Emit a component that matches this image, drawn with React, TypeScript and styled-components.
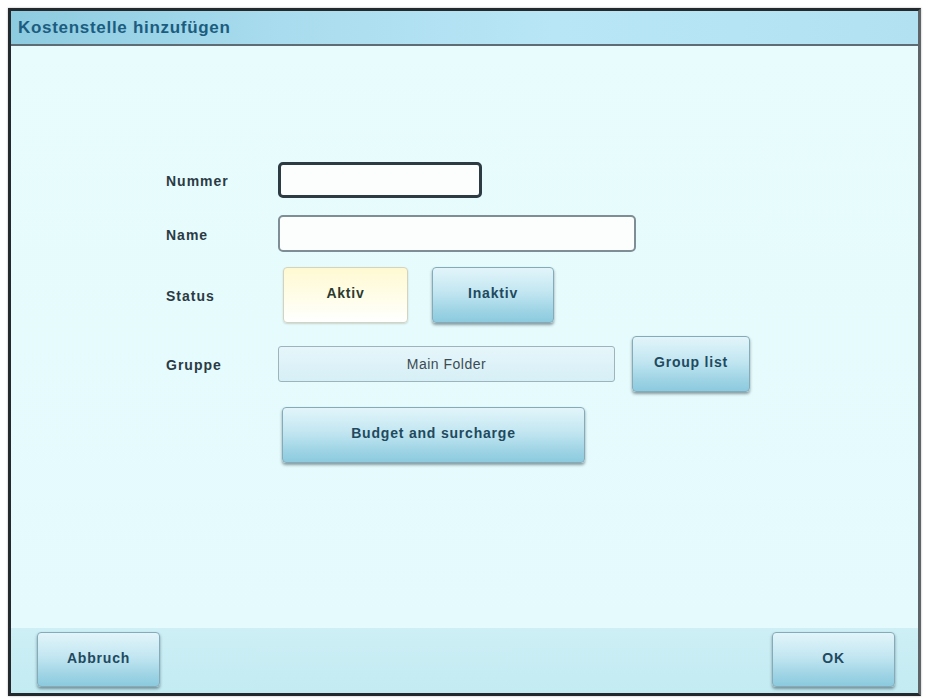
import React from "react";
import styled, { createGlobalStyle } from "styled-components";

const Global = createGlobalStyle`
  html, body { margin: 0; padding: 0; background: #ffffff; }
  body { font-family: "Liberation Sans", Arial, sans-serif; }
  #root { padding: 8px 5px 2px 8px; }
`;

const Frame = styled.div`
  width: 913px;
  height: 688px;
  box-sizing: border-box;
  border: 3px solid #23292d;
  border-right-color: #5d6569;
  display: flex;
  flex-direction: column;
  background: #e6fbfd;
  box-shadow: 0 0 2px rgba(0,0,0,0.3);
`;

const TitleBar = styled.div`
  height: 35px;
  flex: none;
  box-sizing: border-box;
  border-bottom: 2px solid #5e6d73;
  background: linear-gradient(90deg, #8dcbe0 0%, #a9dcee 30%, #b8e6f6 60%, #b2e2f2 100%);
  display: flex;
  align-items: center;
  padding-left: 7px;
  color: #1b5d80;
  font-weight: bold;
  font-size: 17px;
  letter-spacing: 0.7px;
`;

const Content = styled.div`
  flex: 1;
  padding: 116px 0 0 155px;
  background: linear-gradient(180deg, #e8fcfd 0%, #e4fafc 100%);
`;

const Row = styled.div<{ $h: number; $mt: number }>`
  display: flex;
  align-items: center;
  height: ${(p) => p.$h}px;
  margin-top: ${(p) => p.$mt}px;
`;

const Label = styled.div`
  width: 112px;
  flex: none;
  font-weight: bold;
  font-size: 14px;
  letter-spacing: 1px;
  color: #2b3a44;
  padding-top: 2px;
`;

const Input = styled.div<{ $w: number; $h: number; $strong?: boolean }>`
  width: ${(p) => p.$w}px;
  height: ${(p) => p.$h}px;
  box-sizing: border-box;
  background: #fcfefe;
  border: ${(p) => (p.$strong ? "3px solid #2d3b42" : "2px solid #7f8e94")};
  border-radius: 5px;
`;

const Field = styled.div`
  width: 337px;
  height: 36px;
  box-sizing: border-box;
  border: 1px solid #9db4bc;
  border-radius: 3px;
  background: linear-gradient(180deg, #e6f6fa 0%, #d6eff6 100%);
  display: flex;
  align-items: center;
  justify-content: center;
  font-size: 14px;
  letter-spacing: 0.5px;
  color: #3d4b52;
`;

const Button = styled.div<{ $w: number; $h?: number; $ml?: number; $active?: boolean }>`
  width: ${(p) => p.$w}px;
  height: ${(p) => p.$h ?? 56}px;
  margin-left: ${(p) => p.$ml ?? 0}px;
  flex: none;
  box-sizing: border-box;
  border-radius: 4px;
  border: 1px solid ${(p) => (p.$active ? "#d4d3bd" : "#86abb8")};
  background: ${(p) =>
    p.$active
      ? "linear-gradient(180deg, #fff9d2 0%, #fffde9 55%, #ffffff 100%)"
      : "linear-gradient(180deg, #e2f5fa 0%, #c2e6f1 45%, #9dd3e4 80%, #8ccadf 100%)"};
  box-shadow: ${(p) =>
    p.$active ? "0 1px 2px rgba(0,0,0,0.15)" : "0 2px 3px rgba(20,40,50,0.45)"};
  display: flex;
  align-items: center;
  justify-content: center;
  font-weight: bold;
  font-size: 14px;
  letter-spacing: 0.8px;
  color: ${(p) => (p.$active ? "#2d3a30" : "#1f4a5f")};
  padding-bottom: 4px;
`;

const Footer = styled.div`
  height: 65px;
  flex: none;
  box-sizing: border-box;
  background: linear-gradient(180deg, #cdeff5 0%, #c3ebf2 100%);
  display: flex;
  align-items: center;
  justify-content: space-between;
  padding: 0 23px 2px 26px;
`;

export default function App() {
  return (
    <>
      <Global />
      <Frame>
        <TitleBar>Kostenstelle hinzufügen</TitleBar>
        <Content>
          <Row $h={36} $mt={0}>
            <Label>Nummer</Label>
            <Input $w={204} $h={36} $strong />
          </Row>
          <Row $h={37} $mt={17}>
            <Label>Name</Label>
            <Input $w={358} $h={37} />
          </Row>
          <Row $h={56} $mt={15}>
            <Label>Status</Label>
            <Button $w={125} $ml={5} $active>Aktiv</Button>
            <Button $w={122} $ml={24}>Inaktiv</Button>
          </Row>
          <Row $h={56} $mt={13}>
            <Label>Gruppe</Label>
            <Field>Main Folder</Field>
            <Button $w={118} $ml={17}>Group list</Button>
          </Row>
          <Row $h={56} $mt={15}>
            <Label />
            <Button $w={303} $ml={4}>Budget and surcharge</Button>
          </Row>
        </Content>
        <Footer>
          <Button $w={123} $h={55}>Abbruch</Button>
          <Button $w={123} $h={55}>OK</Button>
        </Footer>
      </Frame>
    </>
  );
}
